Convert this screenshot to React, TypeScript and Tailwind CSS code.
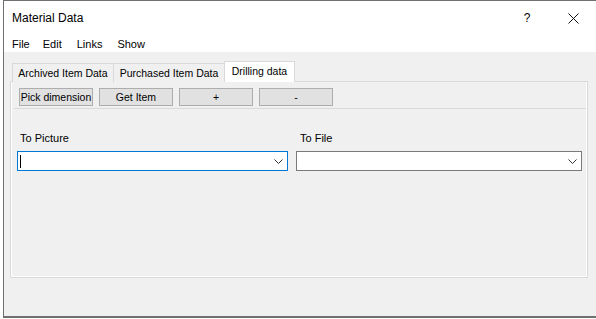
import React from "react";

function Chevron() {
  return (
    <svg width="9" height="5" viewBox="0 0 9 5" className="block">
      <path d="M0.5 0.5 L4.5 4.5 L8.5 0.5" fill="none" stroke="#333" strokeWidth="1" />
    </svg>
  );
}

function Btn({ label }: { label: string }) {
  return (
    <div className="w-[74px] h-[18px] border border-[#adadad] bg-[#e1e1e1] flex items-center justify-center text-[10.5px] leading-none">
      {label}
    </div>
  );
}

export default function App() {
  return (
    <div className="w-[596px] h-[319px] bg-white overflow-hidden text-black font-['Liberation_Sans',Arial,sans-serif]">
      <div className="ml-[3px] h-[318px] border-l border-t border-b-2 border-[#707070] flex flex-col">
        {/* title bar */}
        <div className="h-[32px] flex items-center bg-white">
          <span className="pl-[8px] text-[12px] leading-none pt-[2px]">Material Data</span>
          <div className="flex-1" />
          <div className="w-[46px] h-full flex items-center justify-center text-[12px] pt-[2px]">?</div>
          <div className="w-[46px] h-full flex items-center justify-center pt-[2px]">
            <svg width="11" height="11" viewBox="0 0 11 11">
              <path d="M0.5 0.5 L10.5 10.5 M10.5 0.5 L0.5 10.5" stroke="#111" strokeWidth="1" fill="none" />
            </svg>
          </div>
        </div>
        {/* menu bar */}
        <div className="h-[19px] flex items-center bg-white text-[11px] leading-none pt-[4px]">
          <span className="ml-[8px]">File</span>
          <span className="ml-[13px]">Edit</span>
          <span className="ml-[15px]">Links</span>
          <span className="ml-[15px]">Show</span>
        </div>
        {/* body */}
        <div className="flex-1 bg-[#f0f0f0] pt-[9px]">
          {/* tabs */}
          <div className="flex items-end h-[21px] pl-[8px] relative z-10 -mb-px">
            <div className="w-[102px] h-[19px] border border-b-0 border-[#d9d9d9] bg-[#f0f0f0] flex items-center justify-center text-[10.5px] leading-none">
              Archived Item Data
            </div>
            <div className="w-[111px] h-[19px] border border-b-0 border-l-0 border-[#d9d9d9] bg-[#f0f0f0] flex items-center justify-center text-[10.5px] leading-none">
              Purchased Item Data
            </div>
            <div className="w-[71px] h-[21px] border border-b-0 border-[#d9d9d9] bg-white flex items-center justify-center text-[10.5px] leading-none -ml-px pb-[2px]">
              Drilling data
            </div>
          </div>
          {/* panel */}
          <div className="ml-[6px] w-[578px] h-[197px] border border-[#d9d9d9] shadow-[inset_1px_0_0_#fff,inset_-1px_-1px_0_#fff] bg-[#f0f0f0] flex flex-col">
            <div className="pl-[8px] pt-[6px] flex gap-[6px]">
              <Btn label="Pick dimension" />
              <Btn label="Get Item" />
              <Btn label="+" />
              <Btn label="-" />
            </div>
            <div className="mt-[2px] ml-[3px] mr-[1px] h-px bg-[#dadada]" />
            <div className="mt-[23px] ml-[6px] flex gap-[8px]">
              <div className="w-[271px] flex flex-col">
                <span className="pl-[3px] text-[11px] leading-[13px]">To Picture</span>
                <div className="mt-[6px] h-[20px] border border-[#0078d7] bg-white flex items-center pl-[2px] pr-[4px]">
                  <div className="w-px h-[13px] bg-black" />
                  <div className="flex-1" />
                  <Chevron />
                </div>
              </div>
              <div className="w-[286px] flex flex-col">
                <span className="pl-[4px] text-[11px] leading-[13px]">To File</span>
                <div className="mt-[6px] h-[20px] border border-[#7a7a7a] bg-white flex items-center justify-end pr-[4px]">
                  <Chevron />
                </div>
              </div>
            </div>
          </div>
        </div>
      </div>
    </div>
  );
}
